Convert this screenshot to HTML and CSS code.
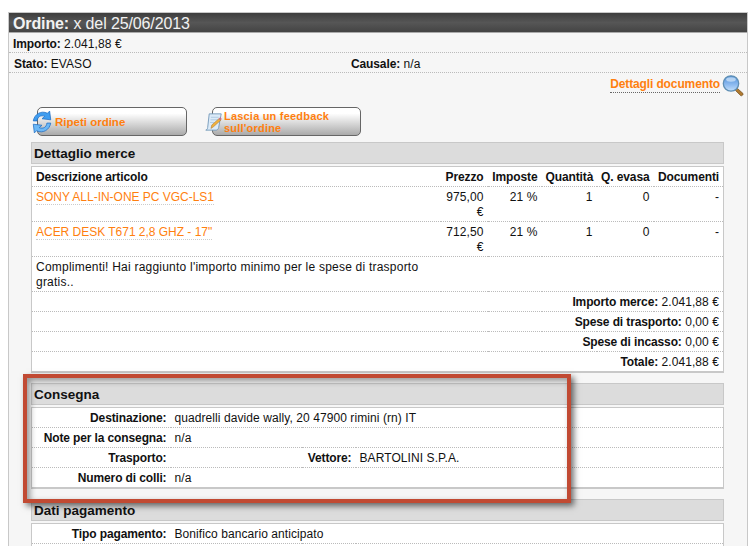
FILE: index.html
```html
<!DOCTYPE html>
<html lang="it">
<head>
<meta charset="utf-8">
<title>Ordine</title>
<link rel="stylesheet" href="styles.css">
</head>
<body>
<div class="panel">
  <h1 class="title"><b>Ordine:</b> x del 25/06/2013</h1>
  <div class="info first"><b>Importo:</b> 2.041,88 €</div>
  <div class="info second">
    <span class="stato"><b>Stato:</b> EVASO</span>
    <span><b>Causale:</b> n/a</span>
  </div>
  <div class="details">
    <a class="details-link">Dettagli documento</a>
    <svg class="lens" width="22" height="22" viewBox="0 0 22 22">
      <defs>
        <linearGradient id="lg" x1="0" y1="0" x2="0" y2="1"><stop offset="0" stop-color="#4f8fd8"/><stop offset=".6" stop-color="#8fbcf0"/><stop offset="1" stop-color="#c4e0fa"/></linearGradient>
      </defs>
      <path d="M13.500 15.500l2-2 5.500 5c.6 1-1.200 2.800-2.200 2.200z" fill="#b07a30" stroke="#6f4a1c" stroke-width=".7"/>
      <circle cx="9" cy="8.500" r="7.700" fill="url(#lg)" stroke="#5f8fb4" stroke-width="1.300"/>
      <ellipse cx="9" cy="4.500" rx="4.800" ry="2.200" fill="#d6e8fa" opacity=".7"/>
    </svg>
  </div>
  <div class="actions">
    <button class="btn btn-repeat">
      <svg class="btn-icon" width="24" height="24" viewBox="3 1 18 22">
        <path d="M4 11C5 5 11 1 17 4l2-2 1 8-8-1 2.500-2.200C11 5.500 8 7 7.500 11z" fill="#3f9df0" stroke="#1f6fc4" stroke-width=".7"/>
        <path d="M20 13c-1 6-7 10-13 7l-2 2-1-8 8 1-2.500 2.200C13 18.500 16 17 16.500 13z" fill="#6cb8f6" stroke="#1f6fc4" stroke-width=".7"/>
      </svg>
      <span>Ripeti ordine</span>
    </button>
    <button class="btn btn-feedback">
      <svg class="btn-icon" width="19" height="18" viewBox="0 0 20 21">
        <path d="M5 1h14l-3 16c-.5 2-1.500 3-3 3H1c1.500-.6 2-1.500 2.200-3z" fill="#dcebf8" stroke="#6d93b5"/>
        <path d="M7 5h9M6.500 8h9M6 11h5" stroke="#a9c6de"/>
        <path d="M7 18l1-4 9-8 2 2-9 8z" fill="#f0b23c" stroke="#a8702c" stroke-width=".6"/>
        <path d="M16 7l2-2 1.500 1.500-2 2z" fill="#c9688f"/>
      </svg>
      <span>Lascia un feedback sull'ordine</span>
    </button>
  </div>

  <h2 class="head">Dettaglio merce</h2>
  <table class="box goods">
    <colgroup><col class="c-desc"><col class="c-price"><col class="c-tax"><col class="c-qty"><col class="c-ev"><col></colgroup>
    <tr><th class="left">Descrizione articolo</th><th>Prezzo</th><th>Imposte</th><th>Quantità</th><th>Q. evasa</th><th>Documenti</th></tr>
    <tr><td class="left"><a class="item">SONY ALL-IN-ONE PC VGC-LS1</a></td><td>975,00 €</td><td>21 %</td><td>1</td><td>0</td><td>-</td></tr>
    <tr><td class="left"><a class="item">ACER DESK T671 2,8 GHZ - 17"</a></td><td>712,50 €</td><td>21 %</td><td>1</td><td>0</td><td>-</td></tr>
    <tr><td class="left msg">Complimenti! Hai raggiunto l'importo minimo per le spese di trasporto gratis..</td><td></td><td></td><td></td><td></td><td></td></tr>
    <tr><td colspan="6"><b>Importo merce:</b> 2.041,88 €</td></tr>
    <tr><td colspan="6"><b>Spese di trasporto:</b> 0,00 €</td></tr>
    <tr><td colspan="6"><b>Spese di incasso:</b> 0,00 €</td></tr>
    <tr><td colspan="6"><b>Totale:</b> 2.041,88 €</td></tr>
  </table>

  <h2 class="head">Consegna</h2>
  <table class="box kv">
    <colgroup><col class="k-label"><col class="k-val"><col class="k-label2"><col></colgroup>
    <tr><th>Destinazione:</th><td colspan="3">quadrelli davide wally, 20 47900 rimini (rn) IT</td></tr>
    <tr><th>Note per la consegna:</th><td colspan="3">n/a</td></tr>
    <tr><th>Trasporto:</th><td></td><th>Vettore:</th><td>BARTOLINI S.P.A.</td></tr>
    <tr><th>Numero di colli:</th><td colspan="3">n/a</td></tr>
  </table>

  <h2 class="head">Dati pagamento</h2>
  <table class="box kv">
    <colgroup><col class="k-label"><col class="k-val"><col class="k-label2"><col></colgroup>
    <tr><th>Tipo pagamento:</th><td colspan="3">Bonifico bancario anticipato</td></tr>
    <tr><td colspan="4"></td></tr>
  </table>
</div>
<div class="callout"></div>
</body>
</html>
```
FILE: styles.css
```css
html, body { margin: 0; padding: 0; }
body {
  position: relative;
  height: 546px;
  overflow: hidden;
  background: #fff;
  font: 12px/15px "Liberation Sans", Arial, sans-serif;
  letter-spacing: .08px;
  color: #111;
}
b, th { font-weight: bold; letter-spacing: -.12px; }
.panel {
  margin: 12px 1px 0 8px;
  padding-bottom: 40px;
  background: #f6f6f6;
  border: 1px solid #c8c8c8;
  border-width: 1px 1px 0 1px;
}
.title {
  margin: 0;
  height: 19px;
  padding: 0 0 0 4px;
  font: 16px/22px "Liberation Sans", Arial, sans-serif;
  letter-spacing: -.12px;
  color: #f2f2f2;
  background: linear-gradient(#3e3e3e, #565656 50%, #444);
  border-bottom: 1px solid #aaa;
}
.info { height: 15px; padding: 4px 0 0 4px; border-bottom: 1px dotted #bbb; }
.second { display: flex; padding-left: 5px; }
.stato { width: 337px; }
.details {
  display: flex;
  justify-content: flex-end;
  align-items: flex-start;
  height: 34px;
  padding-right: 3px;
}
.details-link {
  margin-top: 4px;
  color: #ff7f0f;
  font-weight: bold;
  letter-spacing: -.12px;
  border-bottom: 1px dotted #666;
}
.lens { margin: 2px 0 0 2px; }
.actions { display: flex; height: 35px; padding-left: 28px; }
.btn {
  display: flex;
  align-items: center;
  box-sizing: border-box;
  width: 150px;
  height: 29px;
  padding: 0;
  border: 1px solid #666;
  border-radius: 5px;
  background: linear-gradient(#fff 20%, #aaa);
  color: #ff7f0f;
  font: bold 11.500px/12px "Liberation Sans", Arial, sans-serif;
  text-align: left;
}
.btn-feedback { width: 149px; margin-left: 25px; font-size: 11px; letter-spacing: .2px; }
.btn-repeat .btn-icon { margin: 0 1px 0 -8px; flex: none; }
.btn-feedback .btn-icon { margin: 0 1px 0 -9px; flex: none; }
.btn-feedback span { width: 125px; }
.head {
  margin: 0 23px 2px 22px;
  height: 20px;
  padding-left: 2px;
  font: bold 13.500px/22px "Liberation Sans", Arial, sans-serif;
  letter-spacing: 0;
  background: #dcdcdc;
  border: 1px solid #c8c8c8;
  color: #111;
}
.box {
  box-sizing: border-box;
  width: 693px;
  margin: 0 0 10px 22px;
  table-layout: fixed;
  border-collapse: collapse;
  background: #fff;
  border: 1px solid #c8c8c8;
  border-bottom-width: 2px;
}
.box td, .box th {
  padding: 3px 4px 1px;
  border-bottom: 1px dotted #bbb;
  vertical-align: top;
  text-align: right;
  height: 15px;
}
.box th { white-space: nowrap; }
.box .left { text-align: left; }
.item { color: #ff7f0f; letter-spacing: -.02px; border-bottom: 1px dotted #ccc; }
.c-desc { width: 409px; }
.c-price { width: 47px; }
.c-tax { width: 54px; }
.c-qty { width: 55px; }
.c-ev { width: 57px; }
.box .msg { padding-right: 14px; letter-spacing: .22px; }
.kv td { text-align: left; }
.k-label { width: 139px; }
.k-val { width: 131px; }
.k-label2 { width: 54px; }
.callout {
  position: absolute;
  left: 23px;
  top: 374px;
  box-sizing: border-box;
  width: 548px;
  height: 129px;
  border: 4px solid #c14a33;
  box-shadow: 3px 3px 6px rgba(0,0,0,.55), inset 3px 3px 6px rgba(0,0,0,.4);
}
```
